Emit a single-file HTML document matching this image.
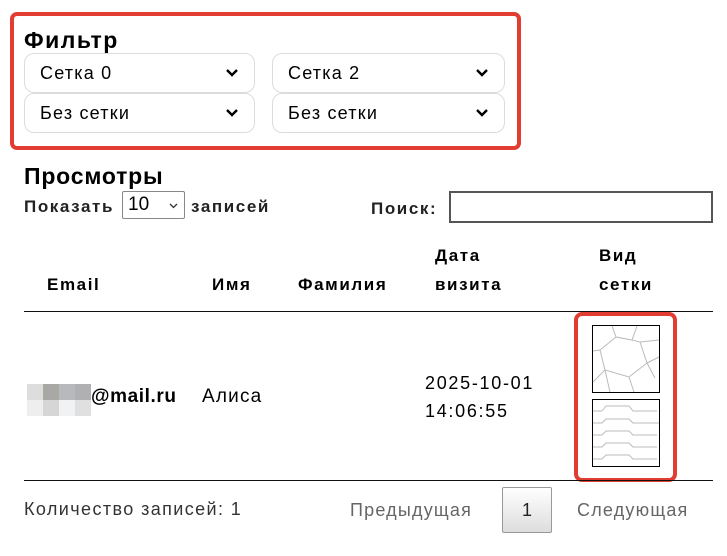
<!DOCTYPE html>
<html><head><meta charset="utf-8"><style>
*{box-sizing:border-box;margin:0;padding:0}
body{width:727px;height:556px;background:#fff;font-family:"Liberation Sans",sans-serif;color:#000;position:relative;overflow:hidden;letter-spacing:1.2px}
.a{position:absolute;white-space:nowrap}
.b{font-weight:bold}
.sel{position:absolute;border:1px solid #dcdcdc;border-radius:10px;height:40px;font-size:18px;padding:9px 0 0 15px}
.sel svg{position:absolute;right:16px;top:15px}
.h{font-size:17px;font-weight:bold;letter-spacing:1.6px}
</style></head><body>
<div class="a" style="left:10px;top:12px;width:511px;height:138px;border:4px solid #e23d33;border-radius:7px"></div>
<div class="a b" style="left:24px;top:27px;font-size:23px;letter-spacing:1.5px">Фильтр</div>
<div class="sel" style="left:24px;top:53px;width:231px">Сетка 0<svg width="12" height="8"><path d="M1 1L6 6L11 1" stroke="#000" stroke-width="2.4" fill="none"/></svg></div>
<div class="sel" style="left:272px;top:53px;width:233px">Сетка 2<svg width="12" height="8"><path d="M1 1L6 6L11 1" stroke="#000" stroke-width="2.4" fill="none"/></svg></div>
<div class="sel" style="left:24px;top:93px;width:231px">Без сетки<svg width="12" height="8"><path d="M1 1L6 6L11 1" stroke="#000" stroke-width="2.4" fill="none"/></svg></div>
<div class="sel" style="left:272px;top:93px;width:233px">Без сетки<svg width="12" height="8"><path d="M1 1L6 6L11 1" stroke="#000" stroke-width="2.4" fill="none"/></svg></div>

<div class="a b" style="left:24px;top:163px;font-size:23px;letter-spacing:0.8px">Просмотры</div>
<div class="a b" style="left:24px;top:197px;font-size:17px;color:#222;letter-spacing:1.6px">Показать</div>
<div class="a" style="left:122px;top:191px;width:63px;height:28px;border:1px solid #888;border-radius:2px;font-size:19px;padding:2px 0 0 5px;letter-spacing:0">10<svg style="position:absolute;right:6px;top:11px" width="9" height="6"><path d="M1 1L4.5 4.5L8 1" stroke="#333" stroke-width="1.3" fill="none"/></svg></div>
<div class="a b" style="left:191px;top:197px;font-size:17px;color:#222;letter-spacing:1.6px">записей</div>
<div class="a b" style="left:371px;top:199px;font-size:17px;color:#222;letter-spacing:1.6px">Поиск:</div>
<div class="a" style="left:449px;top:191px;width:264px;height:32px;border:2px solid #555"></div>

<div class="a h" style="left:435px;top:246px">Дата</div>
<div class="a h" style="left:599px;top:246px">Вид</div>
<div class="a h" style="left:47px;top:275px">Email</div>
<div class="a h" style="left:212px;top:275px">Имя</div>
<div class="a h" style="left:298px;top:275px">Фамилия</div>
<div class="a h" style="left:435px;top:275px">визита</div>
<div class="a h" style="left:599px;top:275px">сетки</div>
<div class="a" style="left:24px;top:311px;width:689px;height:1px;background:#111"></div>

<div class="a" style="left:27px;top:384px;width:64px;height:32px;display:grid;grid-template-columns:repeat(4,16px);grid-template-rows:16px 16px">
<div style="background:#ddd"></div><div style="background:#a9a8a4"></div><div style="background:#b8b9bd"></div><div style="background:#b0b0b2"></div>
<div style="background:#eee"></div><div style="background:#d6d6d6"></div><div style="background:#f1f2f4"></div><div style="background:#e0e0e0"></div></div>
<div class="a b" style="left:91px;top:386px;font-size:19px;letter-spacing:0.6px">@mail.ru</div>
<div class="a" style="left:202px;top:386px;font-size:19px">Алиса</div>
<div class="a" style="left:425px;top:369px;font-size:18px;line-height:28px;letter-spacing:1.7px">2025-10-01<br>14:06:55</div>

<div class="a" style="left:574px;top:312px;width:103px;height:170px;border:4px solid #e23d33;border-radius:8px"></div>
<svg class="a" style="left:592px;top:325px" width="68" height="68"><rect x="0.5" y="0.5" width="67" height="67" fill="#fff" stroke="#000"/>
<g stroke="#bbb" fill="none"><path d="M20 1L24 12L40 15L45 1M24 12L8 25L13 45L37 52L55 38L48 17L40 15M8 25L1 26M13 45L1 57M37 52L42 67M13 45L18 67M55 38L67 32M48 17L67 15M55 38L63 53"/></g></svg>
<svg class="a" style="left:592px;top:399px" width="68" height="68"><rect x="0.5" y="0.5" width="67" height="67" fill="#fff" stroke="#000"/>
<g stroke="#bbb" fill="none"><path d="M10 12L14 7H37L41 12H65M1 12H10M10 24L14 20H37L41 24H67M1 24H10M10 36L14 32H37L41 36H65M1 36H10M10 48L14 44H37L41 48H65M1 48H10M10 60L14 56H37L41 60H65M1 60H10"/></g></svg>

<div class="a" style="left:24px;top:480px;width:689px;height:1px;background:#111"></div>
<div class="a" style="left:24px;top:499px;font-size:18px;color:#333;letter-spacing:1.4px">Количество записей: 1</div>
<div class="a" style="left:350px;top:500px;font-size:18px;color:#666">Предыдущая</div>
<div class="a" style="left:502px;top:487px;width:50px;height:46px;border:1px solid #999;border-radius:2px;background:linear-gradient(#fff,#ddd);font-size:18px;text-align:center;padding-top:12px;color:#222;letter-spacing:0">1</div>
<div class="a" style="left:577px;top:500px;font-size:18px;color:#666">Следующая</div>
</body></html>
